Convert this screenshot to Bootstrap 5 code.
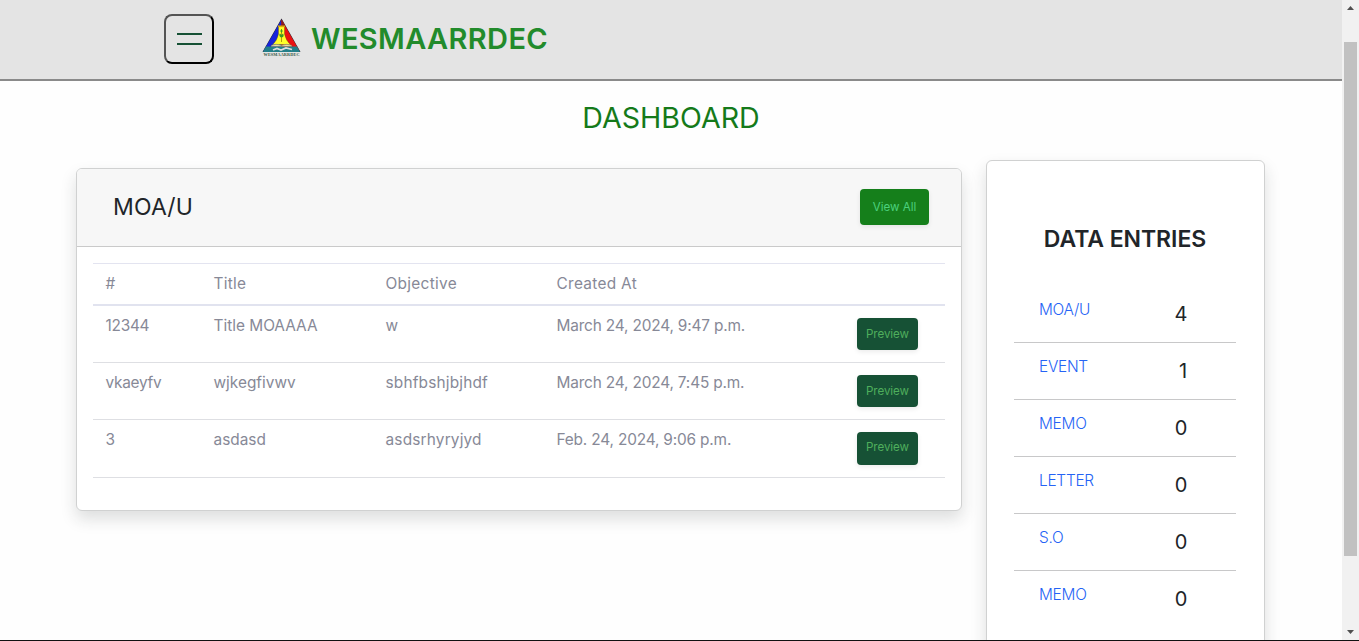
<!DOCTYPE html>
<html lang="en">
<head>
<meta charset="utf-8">
<meta name="viewport" content="width=device-width, initial-scale=1">
<title>WESMAARRDEC Dashboard</title>
<link href="https://cdn.jsdelivr.net/npm/bootstrap@5.3.0/dist/css/bootstrap.min.css" rel="stylesheet">
<style>
  body { font-family: Inter, "Liberation Sans", sans-serif; font-size: 15.4px; line-height: 24px; color: #212529; background: #fefefe; }
  .shell { height: 100vh; border-bottom: 1px solid #111; }
  .topbar { height: 81px; background: #e4e4e4; border-bottom: 2px solid #8a8a8a; padding: 14px 0 0 164px; }
  .menu-btn { width: 50px; height: 50px; border: 2px outset #000; border-radius: 8px; background: none; gap: 8px; }
  .menu-btn span { width: 25px; height: 2px; background: #165135; }
  .brand-logo { margin: 3px 0 0 48px; }
  .brand-name { font-size: 29px; font-weight: 600; color: #228b2b; margin-left: 10px; line-height: 50px; letter-spacing: .36px; }
  .page-title { font-size: 28.6px; line-height: 36px; font-weight: 400; color: #157a1a; margin: 19px 0 0; letter-spacing: 0; }
  .content { padding: 0 77px 0 76px; gap: 24px; margin-top: 24px; }
  .panel { border: 1px solid #d0d1d1; border-radius: 6px; background: #fff; }
  .panel-moa { width: 886px; height: 343px; margin-top: 8px; }
  .panel-head { height: 78px; background: #f7f7f7; border-bottom: 1px solid #cacaca; border-radius: 5px 5px 0 0; padding: 0 32px 1px 36px; }
  .panel-head h2 { font-size: 23px; font-weight: 400; margin: 1px 0 0; letter-spacing: .15px; }
  .btn-all, .btn-view { border: 0; border-radius: 4px; padding: 0; display: block; box-shadow: 0 2px 5px rgba(0,0,0,.08); }
  .btn-all { width: 69px; height: 36px; background: #157f1b; color: #4bd07c; font-size: 11.6px; letter-spacing: -.05px; line-height: 36px; }
  .btn-view { width: 61px; height: 32px; background: #165135; color: #4fae5c; font-size: 11.6px; letter-spacing: -.05px; line-height: 32px; }
  .moa-table tr:last-child .btn-view { height: 33px; line-height: 31px; padding-bottom: 2px; }
  .btn-all:hover, .btn-view:hover { color: #fff; background: #165135; }
  .moa-table { width: 852px; margin: 16px 0 0 16px; table-layout: fixed; color: #878997; border-collapse: separate; border-spacing: 0; }
  .moa-table th, .moa-table td { font-weight: 400; padding: 8px 0 8px 12.5px; vertical-align: top; }
  .moa-table th { border-top: 1px solid #e3e4f0; border-bottom: 2px solid #e1e3ef; letter-spacing: .3px; }
  .moa-table td { height: 57px; border-bottom: 1px solid #dedfe3; }
  .moa-table td:nth-child(1) { letter-spacing: -.25px; }
  .moa-table td:nth-child(3) { letter-spacing: .18px; }
  .moa-table td:nth-child(4) { letter-spacing: -.17px; }
  .moa-table tr:last-child td { height: 58px; }
  .moa-table td:last-child { padding: 12px 0 0 12px; }
  .panel-data { width: 279px; height: 620px; padding: 64px 28px 0 27px; }
  .panel-data h2 { font-size: 23px; line-height: 28px; font-weight: 600; margin: 0 0 33px; letter-spacing: -.05px; }
  .entry { height: 57px; padding: 12px 0 0 25px; border-bottom: 1px solid #c8c8c9; }
  .entry:last-child { border-bottom: 0; }
  .entry a { font-weight: 300; color: #2563f5; text-decoration: none; width: 109px; letter-spacing: -.25px; }
  .entry span { font-size: 20px; width: 66px; text-align: center; margin-top: 4px; }
  .scroller { width: 17px; background: #f1f1f1; padding: 6px 2px; }
  .scroller .thumb { width: 13px; height: 514px; background: #c1c1c1; margin-top: 32px; }
</style>
</head>
<body class="overflow-hidden">
<div class="shell d-flex overflow-hidden">
  <div class="flex-grow-1 overflow-hidden">
    <header class="topbar d-flex align-items-start">
      <button class="menu-btn d-flex flex-column align-items-center justify-content-center p-0" aria-label="Menu"><span></span><span></span></button>
      <svg class="brand-logo" width="39" height="40" viewBox="0 0 39 40">
        <path d="M19.500 1.500L.500 35H38.500Z" fill="#222a33"/>
        <path d="M19.500 2.500L1.500 34H19.500Z" fill="#1722dc"/>
        <path d="M19.500 2.500L37.500 34H19.500Z" fill="#ea1111"/>
        <path d="M19.500 2.500V9H23Z" fill="#8d1a20"/>
        <path d="M16.500 9H22.500V17Q24 24 28.500 27.500H10.500Q15 24 16.500 17Z" fill="#ffff2a" stroke="#5b5315" stroke-width=".4"/>
        <path d="M16 9.300H23" stroke="#dfa50e" stroke-width="1.600"/>
        <path d="M19.500 12V25" stroke="#b29b10" stroke-width="1"/>
        <path d="M19.500 20.500C17 20 17 17 18 16.500L19.500 18L21 16.500C22 18 22 20 19.500 20.500M19.500 16L18.300 14L19.500 12L20.700 14Z" fill="#399c25"/>
        <path d="M4 29.500H35L38 35H1Z" fill="#237f89"/>
        <path d="M9 28.500Q14 26 19.500 28.500Q25 26 30 28.500V29.500H9Z" fill="#e4e1a0" stroke="#555" stroke-width=".4"/>
        <path d="M11 33L15 31.500L19 33L24 31L30 32.500" fill="none" stroke="#ddd" stroke-width="1.800"/>
        <text x="19.500" y="38.700" text-anchor="middle" font-family="Liberation Serif, serif" font-weight="700" font-size="4.300" textLength="36" fill="#365a46">WESMAARRDEC</text>
      </svg>
      <div class="brand-name">WESMAARRDEC</div>
    </header>
    <main>
      <h1 class="page-title text-center">DASHBOARD</h1>
      <div class="content d-flex align-items-start">
        <section class="panel panel-moa shadow">
          <div class="panel-head d-flex align-items-center justify-content-between">
            <h2>MOA/U</h2>
            <button class="btn btn-all">View All</button>
          </div>
          <table class="moa-table">
            <colgroup><col style="width:108px"><col style="width:172px"><col style="width:171px"><col style="width:301px"><col></colgroup>
            <thead><tr><th>#</th><th>Title</th><th>Objective</th><th>Created At</th><th></th></tr></thead>
            <tbody>
              <tr><td>12344</td><td>Title MOAAAA</td><td>w</td><td>March 24, 2024, 9:47 p.m.</td><td><button class="btn btn-view">Preview</button></td></tr>
              <tr><td>vkaeyfv</td><td>wjkegfivwv</td><td>sbhfbshjbjhdf</td><td>March 24, 2024, 7:45 p.m.</td><td><button class="btn btn-view">Preview</button></td></tr>
              <tr><td>3</td><td>asdasd</td><td>asdsrhyryjyd</td><td>Feb. 24, 2024, 9:06 p.m.</td><td><button class="btn btn-view">Preview</button></td></tr>
            </tbody>
          </table>
        </section>
        <aside class="panel panel-data shadow">
          <h2 class="text-center">DATA ENTRIES</h2>
          <div class="entry d-flex align-items-start"><a href="#">MOA/U</a><span>4</span></div>
          <div class="entry d-flex align-items-start"><a href="#">EVENT</a><span class="ps-1">1</span></div>
          <div class="entry d-flex align-items-start"><a href="#">MEMO</a><span>0</span></div>
          <div class="entry d-flex align-items-start"><a href="#">LETTER</a><span>0</span></div>
          <div class="entry d-flex align-items-start"><a href="#">S.O</a><span>0</span></div>
          <div class="entry d-flex align-items-start"><a href="#">MEMO</a><span>0</span></div>
        </aside>
      </div>
    </main>
  </div>
  <div class="scroller flex-shrink-0 d-flex flex-column align-items-center">
    <svg width="7" height="4" viewBox="0 0 7 4"><path d="M0 4L3.500 0L7 4Z" fill="#505050"/></svg>
    <div class="thumb"></div>
    <svg class="mt-auto" width="7" height="4" viewBox="0 0 7 4"><path d="M0 0L3.500 4L7 0Z" fill="#505050"/></svg>
  </div>
</div>
<script src="https://cdn.jsdelivr.net/npm/bootstrap@5.3.0/dist/js/bootstrap.bundle.min.js"></script>
</body>
</html>
